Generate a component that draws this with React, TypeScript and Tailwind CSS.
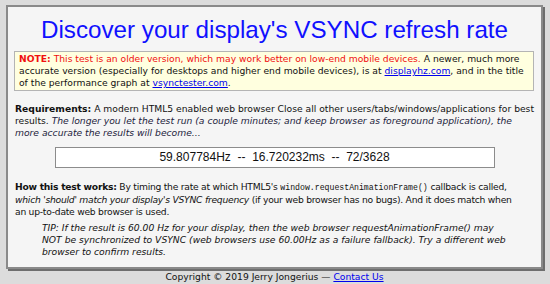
export default function App() {
  return (
    <div className="min-h-[284px] w-[550px] bg-[#dcdcdc] pt-[5px] pl-[6px] font-['DejaVu_Sans',Verdana,sans-serif] text-[9.2px] text-[#111]">
      <div className="w-[537px] border-2 border-[#8a8a8a] bg-[#f5f5f5] shadow-[2px_2px_0_#6e6e6e] pb-[9px]">
        <h1 className="pt-[8px] pb-[6px] text-center font-['Liberation_Sans',Arial,sans-serif] text-[24.2px] leading-[30px] text-[#1010ff]">
          Discover your display's VSYNC refresh rate
        </h1>

        <div className="ml-[6px] w-[520px] border border-[#b4b4b4] bg-[#ffffdf] px-[4px] py-[1px] leading-[12px]">
          <span className="text-[#f01010]">
            <b>NOTE:</b> This test is an older version, which may work better on low-end mobile devices.
          </span>{" "}
          A newer, much more accurate version (especially for desktops and higher end mobile devices), is at{" "}
          <a className="text-[#0000ee] underline">displayhz.com</a>, and in the title of the performance graph at{" "}
          <a className="text-[#0000ee] underline">vsynctester.com</a>.
        </div>

        <p className="mt-[12px] px-[7px] leading-[12px]">
          <b>Requirements:</b> A modern HTML5 enabled web browser Close all other users/tabs/windows/applications for best
          results. <i className="text-[#1c1c3c]">The longer you let the test run (a couple minutes; and keep browser as foreground application), the more accurate the results will become...</i>
        </p>

        <div className="mx-auto mt-[8px] w-[440px] border border-[#8c8c8c] bg-white text-center font-['Liberation_Sans',Arial,sans-serif] text-[12px] leading-[19px] whitespace-pre">
          59.807784Hz  --  16.720232ms  --  72/3628
        </div>

        <p className="mt-[13px] pl-[7px] pr-[2px] leading-[12px] tracking-[-0.25px]">
          <b>How this test works:</b> By timing the rate at which HTML5's{" "}
          <code className="font-['Liberation_Mono',monospace] text-[8.2px] tracking-normal">window.requestAnimationFrame()</code> callback is called,
          <br />
          <i>which 'should' match your display's VSYNC frequency</i> (if your web browser has no bugs). And it does match when
          <br />
          an up-to-date web browser is used.
        </p>

        <p className="mt-[2px] pl-[34px] pr-[26px] italic leading-[12px] pt-[2px]">
          TIP: If the result is 60.00 Hz for your display, then the web browser requestAnimationFrame() may NOT be synchronized to VSYNC (web browsers use 60.00Hz as a failure fallback). Try a different web browser to confirm results.
        </p>
      </div>

      <div className="mt-[2px] w-[537px] text-center leading-[12px]">
        Copyright © 2019 Jerry Jongerius — <a className="text-[#0000ee] underline">Contact Us</a>
      </div>
    </div>
  );
}
